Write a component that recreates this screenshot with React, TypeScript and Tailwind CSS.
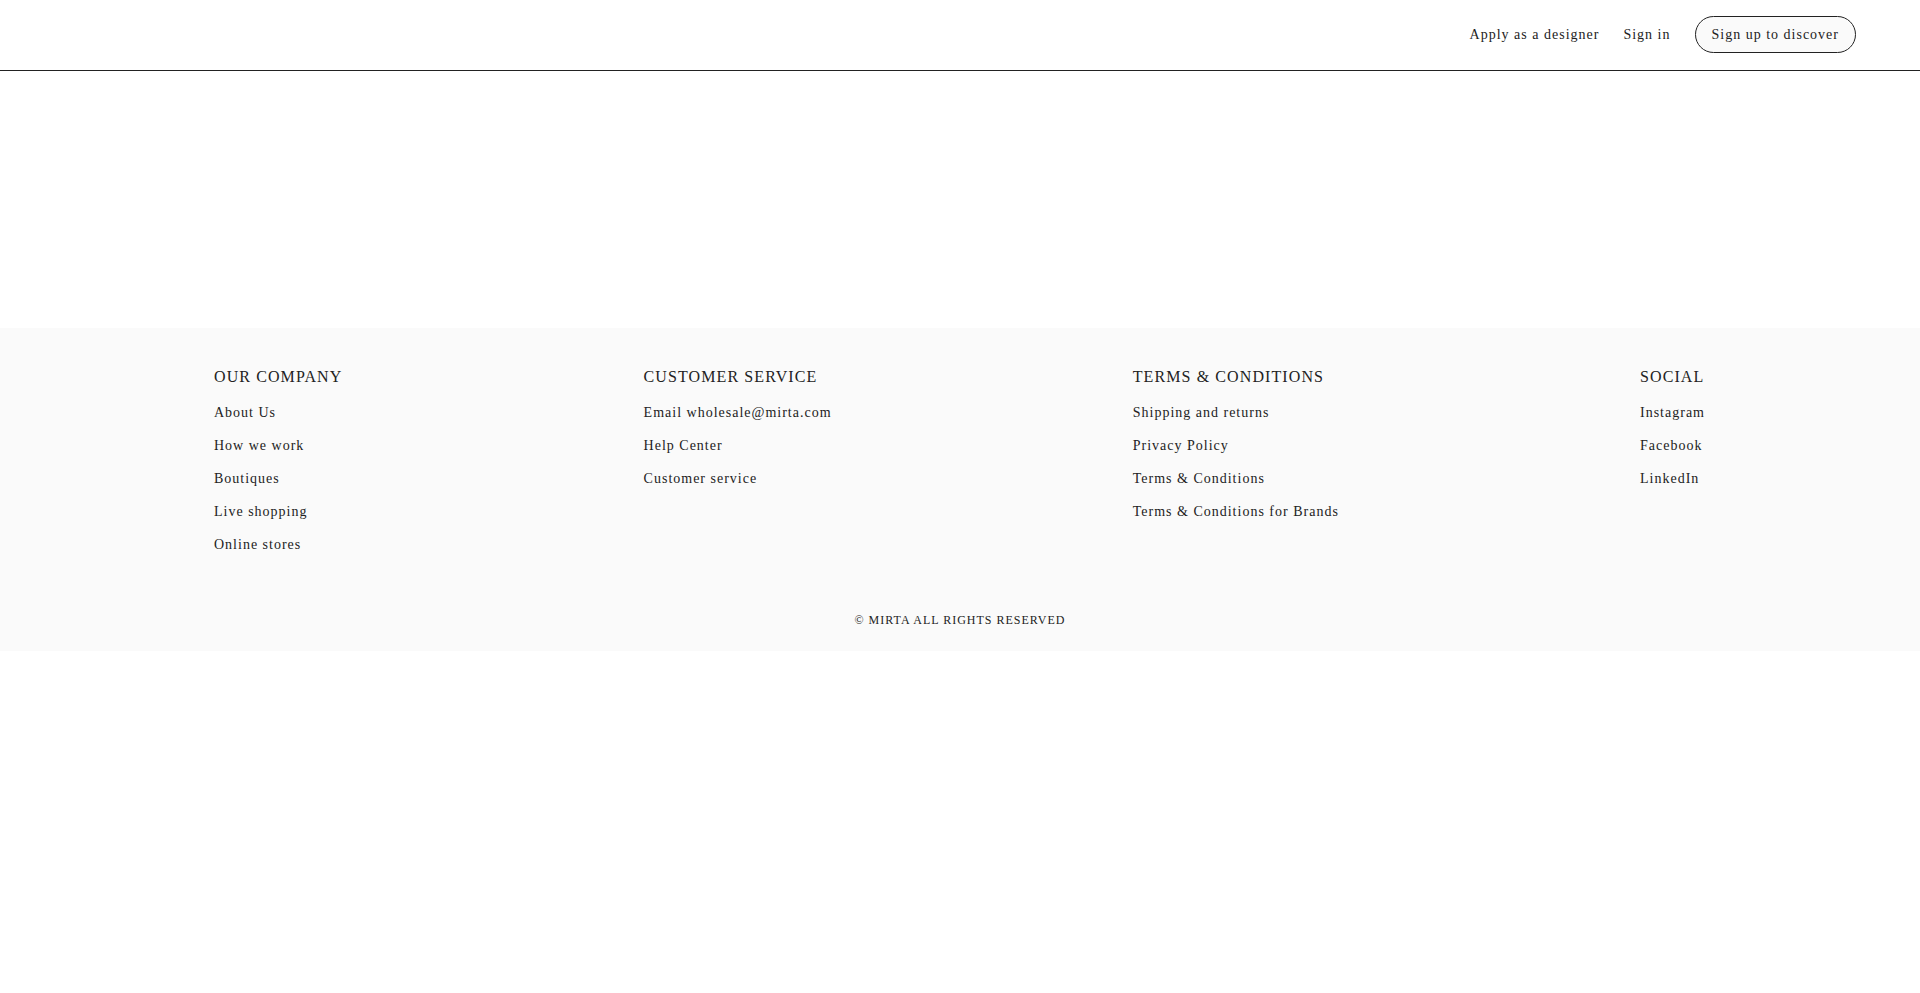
import React from 'react';

const columns = [
  {
    title: 'OUR COMPANY',
    links: ['About Us', 'How we work', 'Boutiques', 'Live shopping', 'Online stores'],
  },
  {
    title: 'CUSTOMER SERVICE',
    links: ['Email wholesale@mirta.com', 'Help Center', 'Customer service'],
  },
  {
    title: 'TERMS & CONDITIONS',
    links: ['Shipping and returns', 'Privacy Policy', 'Terms & Conditions', 'Terms & Conditions for Brands'],
  },
  {
    title: 'SOCIAL',
    links: ['Instagram', 'Facebook', 'LinkedIn'],
  },
];

const App: React.FC = () => {
  return (
    <div className="min-h-screen bg-white text-[#222] font-['Liberation_Serif','Times_New_Roman',serif]">
      {/* Header */}
      <header className="h-[71px] border-b border-[#222] flex items-center justify-end pr-[64px]">
        <nav className="flex items-center text-[14px] leading-5 tracking-[1px] -mt-[1px]">
          <a href="#">Apply as a designer</a>
          <a href="#" className="ml-[24px]">Sign in</a>
          <button className="ml-[24px] h-[37px] px-[16px] rounded-full border border-[#222] bg-[#fafafa] leading-5 tracking-[1px]">
            Sign up to discover
          </button>
        </nav>
      </header>

      {/* Empty content area */}
      <main className="h-[257px]" />

      {/* Footer */}
      <footer className="bg-[#fafafa] pt-[37px] pb-[23px]">
        <div className="pl-[214px] pr-[215px] flex justify-between items-start">
          {columns.map((col) => (
            <div key={col.title}>
              <h3 className="text-[16px] leading-6 tracking-[1.1px]">{col.title}</h3>
              <ul className="mt-[14px] flex flex-col gap-[13px]">
                {col.links.map((link) => (
                  <li key={link} className="text-[14px] leading-5 tracking-[1px]">
                    <a href="#">{link}</a>
                  </li>
                ))}
              </ul>
            </div>
          ))}
        </div>
        <p className="mt-[57px] text-center text-[12px] leading-4 tracking-[1px]">
          © MIRTA ALL RIGHTS RESERVED
        </p>
      </footer>
    </div>
  );
};

export default App;
